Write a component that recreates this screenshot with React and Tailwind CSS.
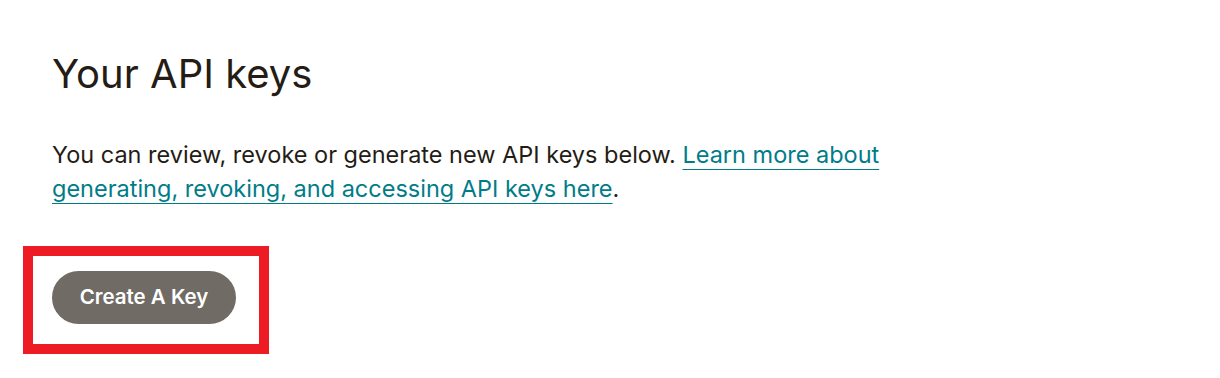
export default function App() {
  return (
    <div className="min-h-[378px] w-[1220px] bg-white pl-[52px] pt-[50px] text-[#241c15]" style={{ fontFamily: 'Inter, "Liberation Sans", sans-serif' }}>
      <h1 className="text-[40px] leading-[48px] font-normal">Your API keys</h1>
      <p className="mt-[40px] w-[880px] text-[23.5px] leading-[34px]">
        You can review, revoke or generate new API keys below.{' '}
        <a href="#" className="text-[#007c89] underline decoration-1 underline-offset-[6px]">
          Learn more about generating, revoking, and accessing API keys here
        </a>
        .
      </p>
      <div className="mt-[40px] -ml-[29px] flex w-fit border-[10px] border-[#ed1c24] pt-[15px] pb-[20px] pl-[19px] pr-[23px]">
        <button className="h-[53px] w-[184px] rounded-full bg-[#716b66] text-[20.5px] font-semibold text-white">
          Create A Key
        </button>
      </div>
    </div>
  );
}
